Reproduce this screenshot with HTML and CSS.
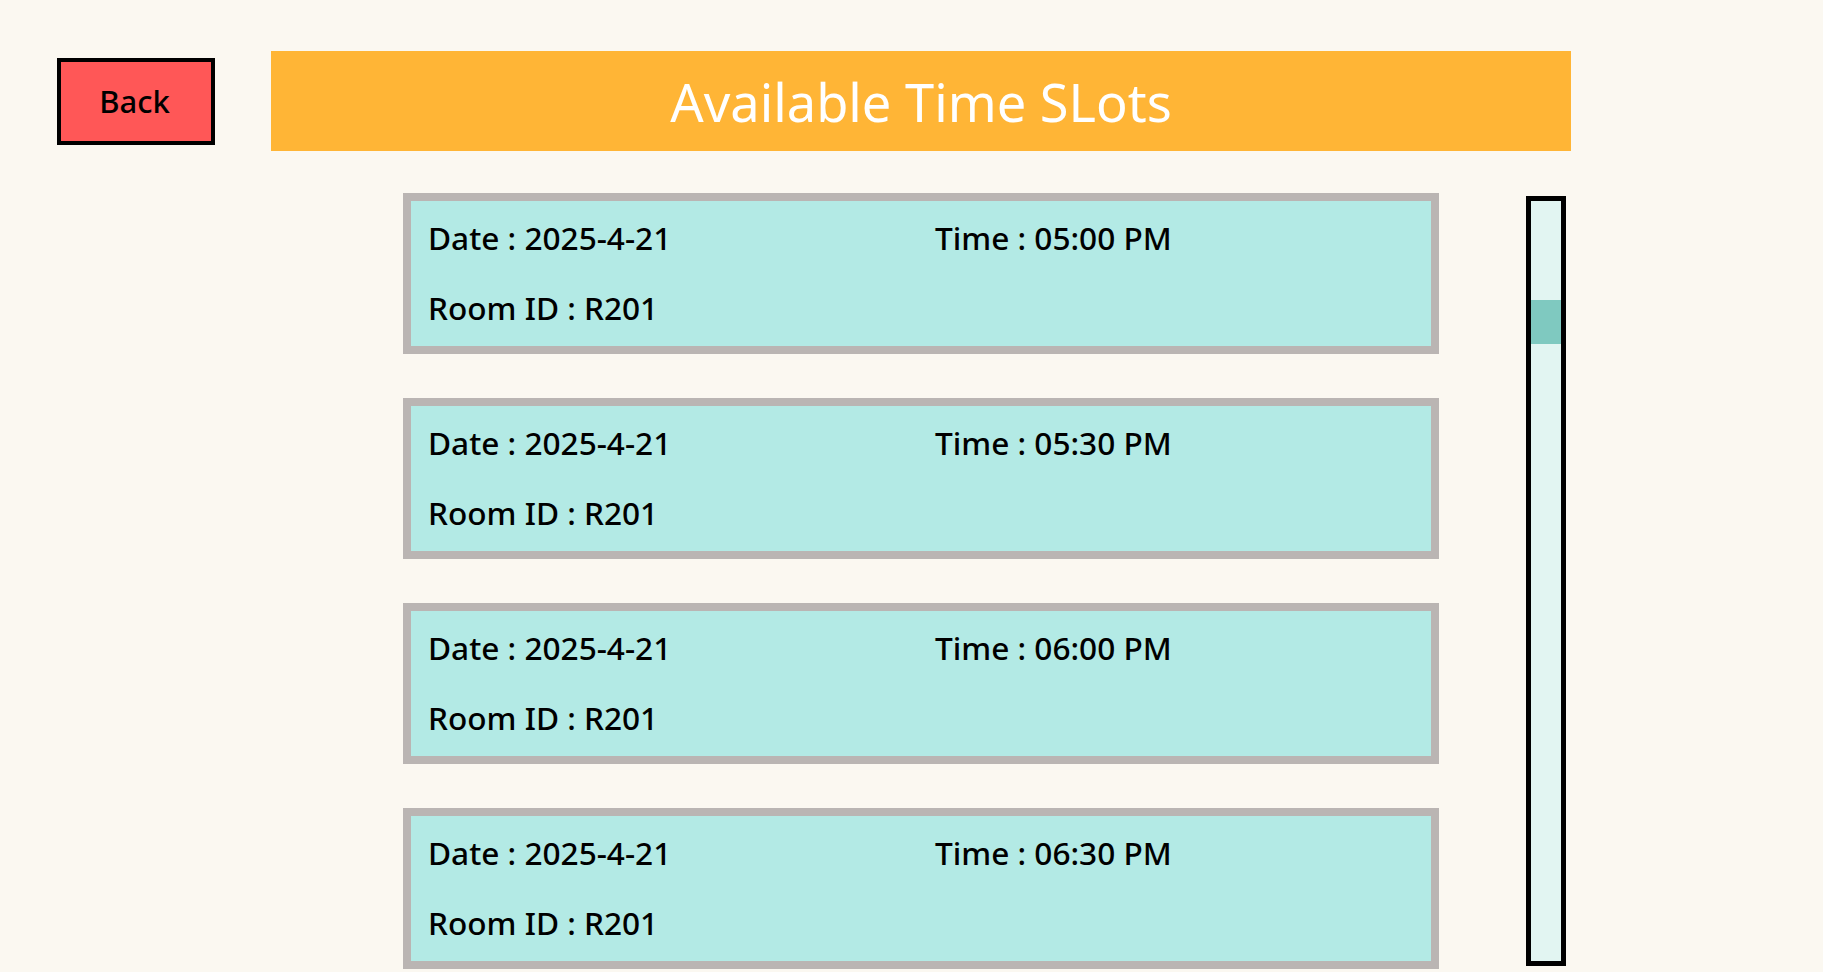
FILE: index.html
```html
<!DOCTYPE html>
<html lang="en">
<head>
<meta charset="utf-8">
<title>Available Time SLots</title>
<link rel="stylesheet" href="styles.css">
</head>
<body>
<div class="page">
  <div class="top-row">
    <button class="back-btn">Back</button>
    <div class="title-bar">Available Time SLots</div>
  </div>
  <div class="main-row">
    <div class="slot-list">
      <div class="slot-card">
        <div class="slot-field">Date : 2025-4-21</div>
        <div class="slot-field">Time : 05:00 PM</div>
        <div class="slot-field">Room ID : R201</div>
      </div>
      <div class="slot-card">
        <div class="slot-field">Date : 2025-4-21</div>
        <div class="slot-field">Time : 05:30 PM</div>
        <div class="slot-field">Room ID : R201</div>
      </div>
      <div class="slot-card">
        <div class="slot-field">Date : 2025-4-21</div>
        <div class="slot-field">Time : 06:00 PM</div>
        <div class="slot-field">Room ID : R201</div>
      </div>
      <div class="slot-card">
        <div class="slot-field">Date : 2025-4-21</div>
        <div class="slot-field">Time : 06:30 PM</div>
        <div class="slot-field">Room ID : R201</div>
      </div>
    </div>
    <div class="scroll-track">
      <div class="scroll-thumb"></div>
    </div>
  </div>
</div>
</body>
</html>
```

FILE: styles.css
```css
html, body {
  margin: 0;
  padding: 0;
  background: #fbf8f1;
  overflow: hidden;
}

body {
  font-family: "Noto Sans", "Open Sans", sans-serif;
  color: #000;
  height: 972px;
}

.page {
  padding-top: 51px;
}

.top-row {
  display: flex;
  align-items: center;
  padding-left: 57px;
  gap: 56px;
}

.back-btn {
  box-sizing: border-box;
  width: 158px;
  height: 87px;
  background: #ff5757;
  border: 4px solid #000;
  font-family: "Noto Sans", sans-serif;
  font-size: 31px;
  font-weight: 500;
  color: #000;
  padding: 0 3px 0 0;
  margin: 0;
}

.title-bar {
  width: 1300px;
  height: 100px;
  background: #ffb536;
  color: #fff;
  font-size: 52.4px;
  font-weight: 400;
  display: flex;
  align-items: center;
  justify-content: center;
  box-sizing: border-box;
}

.main-row {
  display: flex;
  align-items: flex-start;
  margin-top: 42px;
  padding-left: 403px;
  gap: 87px;
}

.slot-list {
  display: flex;
  flex-direction: column;
  gap: 44px;
}

.slot-card {
  box-sizing: border-box;
  width: 1036px;
  height: 161px;
  background: #b3eae5;
  border: 8px solid #bab5b3;
  padding: 15px 0 0 17px;
  display: grid;
  grid-template-columns: 507px 1fr;
  row-gap: 26px;
  align-content: start;
}

.slot-field {
  font-size: 31.6px;
  font-weight: 500;
  line-height: 44px;
  white-space: nowrap;
}

.scroll-track {
  box-sizing: border-box;
  width: 40px;
  height: 770px;
  margin-top: 3px;
  background: #e2f5f2;
  border: 5px solid #000;
  padding-top: 99px;
}

.scroll-thumb {
  height: 44px;
  background: #7fc9c0;
}
```
